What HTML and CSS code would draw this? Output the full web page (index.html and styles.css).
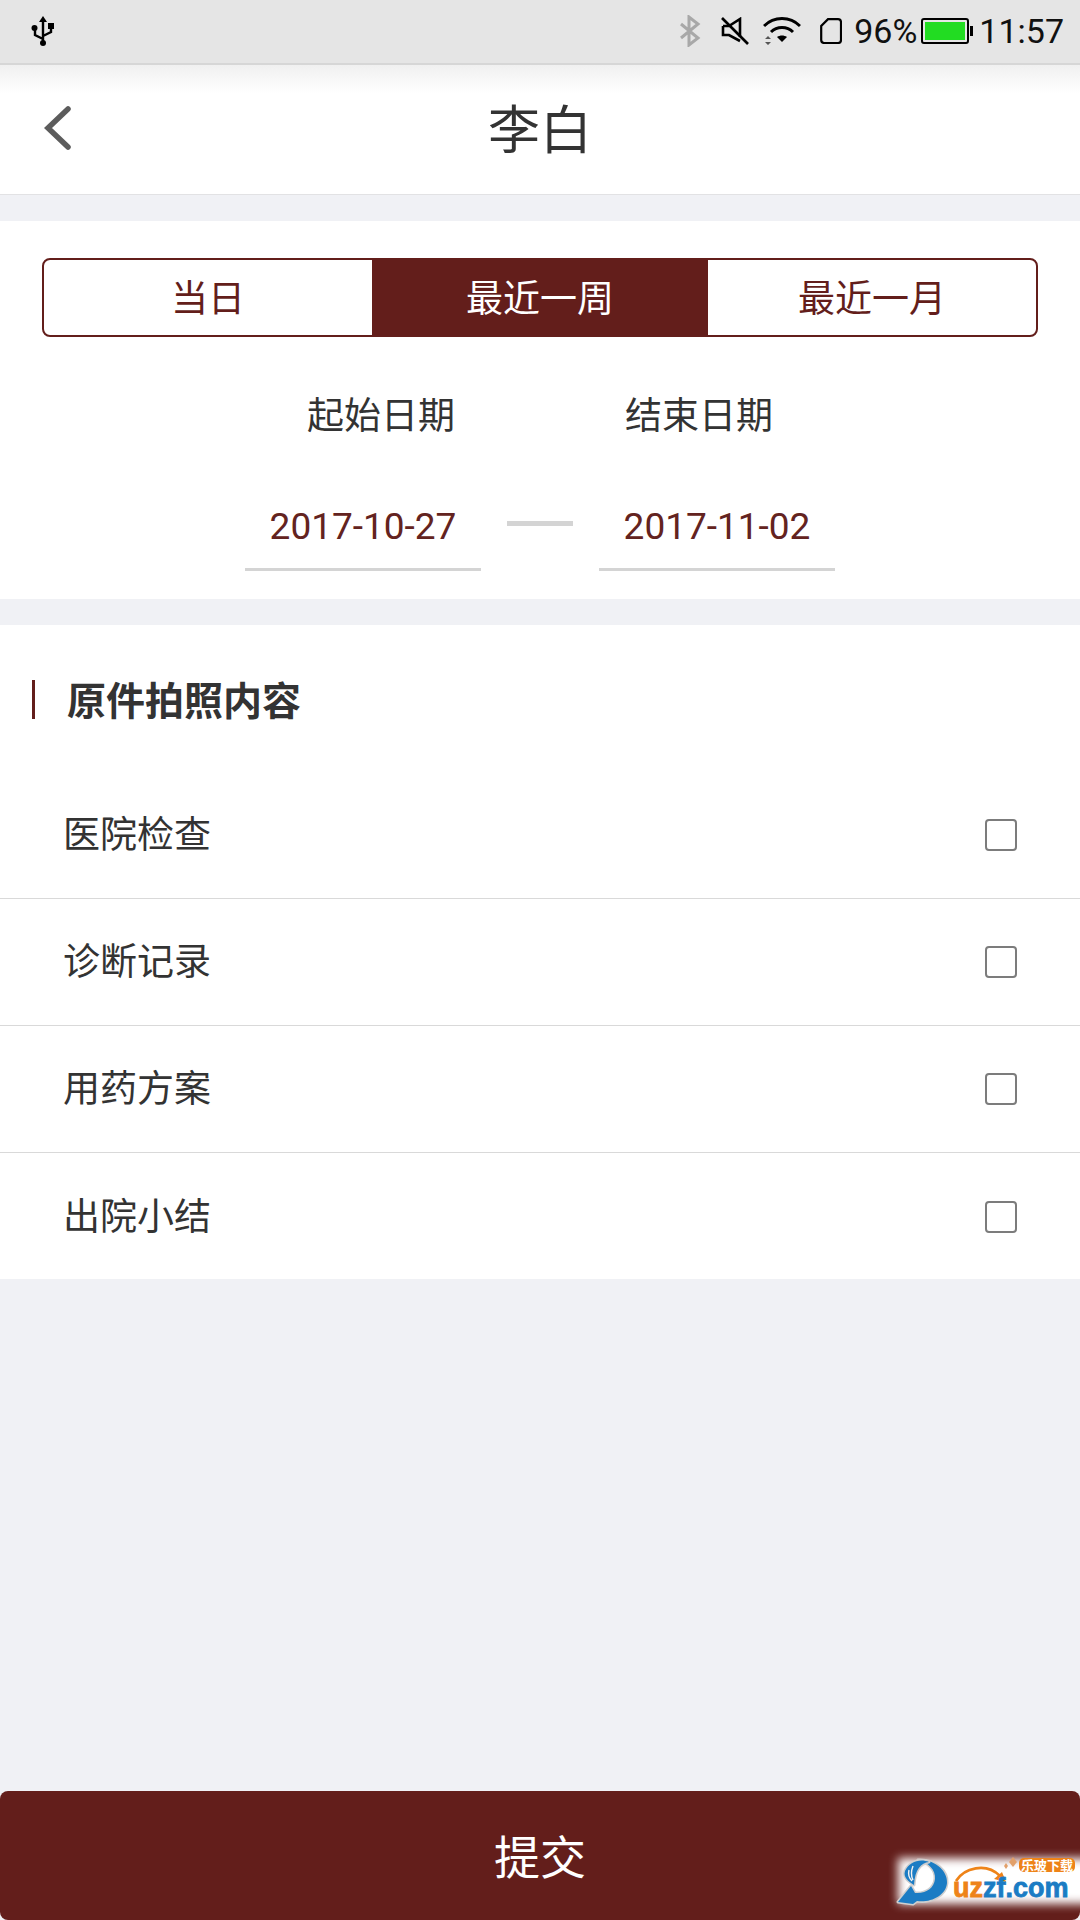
FILE: index.html
```html
<!DOCTYPE html>
<html lang="zh-CN">
<head>
  <meta charset="UTF-8" />
  <title>李白</title>
  <link rel="stylesheet" href="styles.css">
</head>
<body>
  <div class="page">
    <div class="status-bar">
      <svg class="usb-icon" width="24" height="30" viewBox="0 0 24 30">
        <path d="M12 4V27M12 23L4 19V14M12 20L20 16V11" fill="none" stroke="#000" stroke-width="2.4"/>
        <path d="M12 0L16 6H8Z" fill="#000"/>
        <circle cx="12" cy="27" r="3" fill="#000"/>
        <circle cx="3.5" cy="12" r="3" fill="#000"/>
        <rect x="17" y="7" width="6" height="6" fill="#000"/>
      </svg>
      <div class="status-right">
        <svg class="ic-bt" width="24" height="32" viewBox="0 0 24 32">
          <path d="M3 9L20 23L11 30V2L20 9L3 23" fill="none" stroke="#a8a8a8" stroke-width="3"/>
        </svg>
        <svg class="ic-mute" width="28" height="28" viewBox="0 0 28 28">
          <path d="M2 9H8L19 2V20M19 24L8 18H2V9" fill="none" stroke="#000" stroke-width="2.6"/>
          <path d="M1 1L27 27" stroke="#000" stroke-width="2.6"/>
        </svg>
        <svg class="ic-wifi" width="38" height="30" viewBox="0 0 38 30">
          <path d="M1 10C11 0 27 0 37 10M8 16C14 10 24 10 30 16" fill="none" stroke="#000" stroke-width="3"/>
          <path d="M14 21C17 19 21 19 24 21L19 26Z" fill="#000"/>
          <path d="M2 23L5 20L8 23ZM2 26L5 29L8 26Z" fill="#555"/>
        </svg>
        <svg class="ic-sim" width="22" height="26" viewBox="0 0 22 26">
          <path d="M8 1.2H18A3 3 0 0 1 21 4V22A3 3 0 0 1 18 25H4A3 3 0 0 1 1.2 22V8Z" fill="none" stroke="#000" stroke-width="2.2"/>
        </svg>
        <span class="pct">96%</span>
        <div class="battery"><div class="battery-fill"></div></div>
        <span class="clock">11:57</span>
      </div>
    </div>

    <div class="title-bar">
      <svg class="back-icon" width="30" height="46" viewBox="0 0 30 46">
        <path d="M25 4L5 23L25 42" fill="none" stroke="#5c5c5c" stroke-width="5.5" stroke-linecap="round"/>
      </svg>
      <h1>李白</h1>
    </div>

    <div class="panel date-panel">
      <div class="tabs">
        <div class="tab">当日</div>
        <div class="tab active">最近一周</div>
        <div class="tab">最近一月</div>
      </div>
      <div class="date-labels">
        <span>起始日期</span>
        <span>结束日期</span>
      </div>
      <div class="date-values">
        <div class="date-value">2017-10-27</div>
        <div class="date-dash"></div>
        <div class="date-value">2017-11-02</div>
      </div>
    </div>

    <div class="panel list-panel">
      <h2 class="section-title">原件拍照内容</h2>
      <div class="row"><span>医院检查</span><div class="check"></div></div>
      <div class="row"><span>诊断记录</span><div class="check"></div></div>
      <div class="row"><span>用药方案</span><div class="check"></div></div>
      <div class="row"><span>出院小结</span><div class="check"></div></div>
    </div>

    <div class="spacer"></div>

    <div class="submit">提交</div>

    <div class="watermark">
      <svg class="wm-art" width="190" height="70" viewBox="0 0 190 70">
        <!-- swirl -->
        <g stroke="#cfcfcf" stroke-width="3" paint-order="stroke" stroke-linejoin="round">
          <path d="M28 10C46 9 58 22 57 33C56 46 40 53 27 51L23 54L8 52L21 36L25 43C36 44 44 38 45 29C46 20 38 12 28 10Z" fill="#1b7cc4"/>
          <path d="M15 21C19 12 30 8 39 12C31 13 25 19 24 35C18 31 13 27 15 21Z" fill="#1b7cc4"/>
        </g>
        <path d="M19 20C18 24 19 28 22 31M23 16C21 21 21 26 23 30" fill="none" stroke="#f2f2f2" stroke-width="1.4"/>
        <!-- arc over the name -->
        <path d="M66 31C74 18 96 12 110 26" fill="none" stroke="#ee8318" stroke-width="2.6"/>
        <path d="M116 32L104 29L112 22Z" fill="#ee8318"/>
        <!-- sparkles -->
        <path d="M123 7L127 12L123 17L119 12Z" fill="#e2a06a"/>
        <path d="M116 13L118 16L116 19L114 16Z" fill="#e2a06a"/>
      </svg>
      <span class="wm-badge">乐玻下载</span>
      <div class="wm-name"><span class="wm-o">uz</span><span class="wm-b">zf.com</span></div>
    </div>
  </div>
</body>
</html>
```

FILE: styles.css
```css
* {
  box-sizing: border-box;
}

body {
  margin: 0;
  font-family: "Noto Sans CJK SC", Roboto, sans-serif;
  color: #333;
  background: #f0f1f5;
}

.page {
  position: relative;
  display: flex;
  flex-direction: column;
  width: 1080px;
  height: 1920px;
  overflow: hidden;
}

/* status bar */
.status-bar {
  display: flex;
  align-items: center;
  justify-content: space-between;
  height: 65px;
  padding: 0 16px 1px 31px;
  background: #e5e5e5;
  border-bottom: 2px solid #d6d6d6;
  color: #111;
  font-family: Roboto, sans-serif;
  font-size: 34px;
}

.status-right {
  display: flex;
  align-items: center;
}

.ic-bt { margin-right: 19px; }
.ic-mute { margin-right: 14px; }
.ic-wifi { margin-right: 19px; }
.ic-sim { margin-right: 12px; }

.pct {
  margin-right: 4px;
}

.battery {
  position: relative;
  width: 48px;
  height: 26px;
  margin-right: 10px;
  padding: 2px;
  border: 2px solid #000;
  border-radius: 3px;
}

.battery::after {
  content: "";
  position: absolute;
  top: 6px;
  right: -6px;
  width: 3px;
  height: 10px;
  background: #000;
}

.battery-fill {
  height: 100%;
  background: #22dc22;
}

/* title */
.title-bar {
  position: relative;
  display: flex;
  align-items: center;
  justify-content: center;
  height: 130px;
  padding-bottom: 6px;
  background: linear-gradient(#f0f0f0, #fff 28px);
  border-bottom: 1px solid #e2e2e4;
}

.title-bar h1 {
  margin: 0;
  font-size: 52px;
  font-weight: 400;
  line-height: 1;
}

.back-icon {
  position: absolute;
  left: 43px;
  top: 40px;
}

.panel {
  background: #fff;
  margin-top: 26px;
}

/* date panel */
.date-panel {
  height: 378px;
  padding-top: 37px;
}

.tabs {
  display: flex;
  width: 996px;
  height: 79px;
  margin: 0 auto;
  padding-bottom: 4px;
  border: 2px solid #631e1b;
  border-radius: 8px;
  overflow: hidden;
}

.tab {
  display: flex;
  flex: 1;
  align-items: center;
  justify-content: center;
  margin-bottom: -4px;
  padding-bottom: 4px;
  color: #631e1b;
  font-size: 37px;
}

.tab.active {
  flex: 0 0 336px;
  background: #631e1b;
  color: #fff;
}

.date-labels {
  display: flex;
  justify-content: center;
  gap: 170px;
  margin-top: 49px;
  font-size: 37px;
  line-height: 54px;
}

.date-values {
  display: flex;
  align-items: center;
  justify-content: center;
  margin-top: 59px;
}

.date-value {
  width: 236px;
  height: 72px;
  border-bottom: 3px solid #d4d4d4;
  color: #632320;
  font-family: Roboto, sans-serif;
  font-size: 37px;
  line-height: 56px;
  text-align: center;
}

.date-dash {
  width: 66px;
  height: 5px;
  margin: 0 26px 24px;
  background: #d4d4d4;
}

/* list */
.list-panel {
  height: 654px;
}

.section-title {
  position: relative;
  margin: 0;
  height: 147px;
  padding: 0 0 0 67px;
  font-size: 39px;
  font-weight: 700;
  line-height: 146px;
}

.section-title::before {
  content: "";
  position: absolute;
  left: 32px;
  top: 55px;
  width: 3px;
  height: 39px;
  background: #631e1b;
}

.row {
  display: flex;
  align-items: center;
  justify-content: space-between;
  height: 127px;
  padding: 0 63px;
  border-bottom: 1px solid #d9d9d9;
  font-size: 37px;
}

.row span {
  margin-bottom: 6px;
}

.row:last-child {
  border-bottom: none;
}

.check {
  width: 32px;
  height: 32px;
  border: 2px solid #7c7c7c;
  border-radius: 4px;
}

.spacer {
  flex: 1;
}

.submit {
  display: flex;
  align-items: center;
  justify-content: center;
  height: 129px;
  padding-bottom: 4px;
  background: #631e1b;
  border-radius: 8px;
  color: #fff;
  font-size: 46px;
}

/* watermark over the button corner */
.watermark {
  position: absolute;
  right: 0;
  bottom: 0;
  width: 190px;
  height: 70px;
}

.watermark::before {
  content: "";
  position: absolute;
  left: 8px;
  right: -20px;
  top: 8px;
  height: 46px;
  background: #fff;
  filter: blur(5px);
}

.wm-art {
  position: absolute;
  left: 0;
  top: 0;
}

.wm-badge {
  position: absolute;
  left: 129px;
  top: 8px;
  width: 56px;
  height: 14px;
  background: #ee8318;
  border-radius: 5px;
  color: #fff;
  font-size: 13px;
  font-weight: 700;
  line-height: 14px;
  text-align: center;
  white-space: nowrap;
}

.wm-name {
  position: absolute;
  left: 63px;
  top: 23px;
  font-family: "Liberation Sans", sans-serif;
  font-size: 27px;
  font-weight: 700;
  line-height: 31px;
  -webkit-text-stroke: 0.8px currentColor;
  white-space: nowrap;
}

.wm-o { color: #ee8318; }
.wm-b { color: #1b7cc4; }
```
